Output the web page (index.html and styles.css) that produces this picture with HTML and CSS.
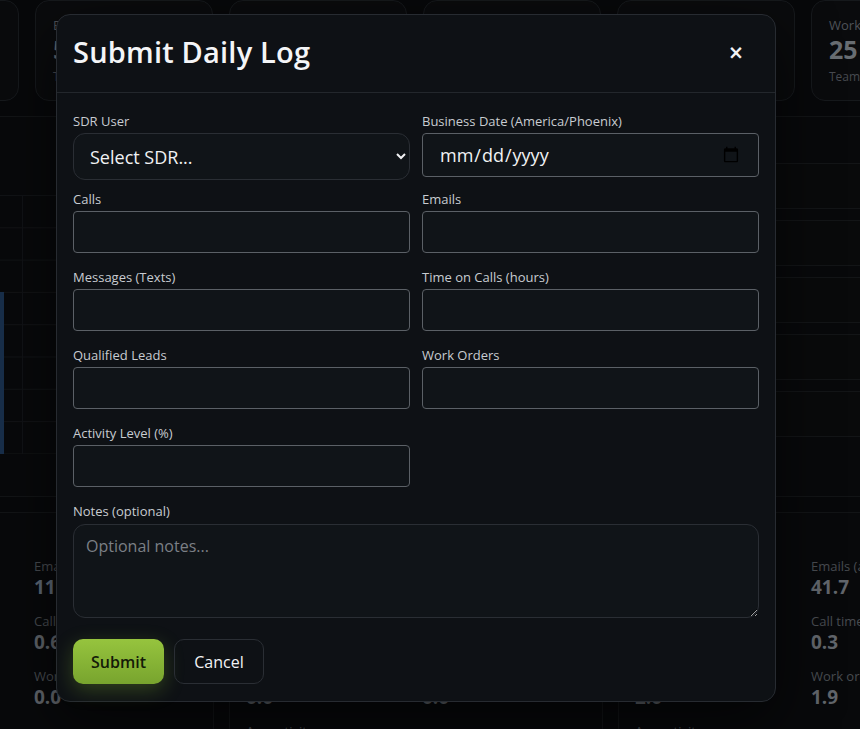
FILE: index.html
```html
<!DOCTYPE html>
<html lang="en">
<head>
  <meta charset="UTF-8" />
  <meta name="viewport" content="width=device-width, initial-scale=1.0"/>
  <title>SDR Dashboard</title>
  <link rel="stylesheet" href="styles.css">
</head>
<body>
  <div class="page">
    <div class="stats">
      <div class="stat"><div class="stat-label">Calls</div><div class="stat-value">48</div><div class="stat-sub">Team total</div></div>
      <div class="stat"><div class="stat-label">Emails</div><div class="stat-value">52</div><div class="stat-sub">Team total</div></div>
      <div class="stat"><div class="stat-label">Messages</div><div class="stat-value">31</div><div class="stat-sub">Team total</div></div>
      <div class="stat"><div class="stat-label">Leads</div><div class="stat-value">12</div><div class="stat-sub">Team total</div></div>
      <div class="stat"><div class="stat-label">Call time</div><div class="stat-value">4.2</div><div class="stat-sub">Team hours</div></div>
      <div class="stat"><div class="stat-label">Work orders</div><div class="stat-value">25</div><div class="stat-sub">Team total</div></div>
    </div>

    <div class="middle">
      <div class="panel chart">
        <div class="grid-area">
          <div class="bar"></div>
        </div>
      </div>
      <div class="panel board">
        <div class="board-row"></div>
        <div class="board-row"></div>
        <div class="board-row"></div>
        <div class="board-row"></div>
        <div class="board-row"></div>
      </div>
    </div>

    <div class="people">
      <div class="person">
        <div class="col">
          <div class="p-label">Calls (avg)</div><div class="p-value">24.0</div>
          <div class="p-label">Texts (avg)</div><div class="p-value">3.0</div>
          <div class="p-label">Leads (avg)</div><div class="p-value">1.0</div>
        </div>
        <div class="col">
          <div class="p-label">Emails (avg)</div><div class="p-value blue">11.0</div>
          <div class="p-label">Call time (avg)</div><div class="p-value">0.6</div>
          <div class="p-label">Work orders (avg)</div><div class="p-value">0.0</div>
        </div>
      </div>
      <div class="person">
        <div class="col">
          <div class="p-label">Calls (avg)</div><div class="p-value">0.0</div>
          <div class="p-label">Texts (avg)</div><div class="p-value">0.0</div>
          <div class="p-label">Leads (avg)</div><div class="p-value">0.0</div>
          <div class="p-label">Avg activity</div>
        </div>
        <div class="col">
          <div class="p-label">Emails (avg)</div><div class="p-value">0.0</div>
          <div class="p-label">Call time (avg)</div><div class="p-value">0.0</div>
          <div class="p-label">Work orders (avg)</div><div class="p-value">0.0</div>
        </div>
      </div>
      <div class="person">
        <div class="col">
          <div class="p-label">Calls (avg)</div><div class="p-value">62.3</div>
          <div class="p-label">Texts (avg)</div><div class="p-value">5.1</div>
          <div class="p-label">Leads (avg)</div><div class="p-value">2.0</div>
          <div class="p-label">Avg activity</div>
        </div>
        <div class="col">
          <div class="p-label">Emails (avg)</div><div class="p-value">41.7</div>
          <div class="p-label">Call time (avg)</div><div class="p-value">0.3</div>
          <div class="p-label">Work orders (avg)</div><div class="p-value">1.9</div>
        </div>
      </div>
    </div>
  </div>

  <div class="overlay"></div>

  <div class="modal">
    <div class="modal-header">
      <h2>Submit Daily Log</h2>
      <button class="close" type="button">&times;</button>
    </div>
    <form class="modal-body">
      <div class="fields">
        <div class="field">
          <label for="sdr">SDR User</label>
          <select id="sdr" class="big-select">
            <option value="">Select SDR...</option>
          </select>
        </div>
        <div class="field">
          <label for="date">Business Date (America/Phoenix)</label>
          <input type="date" id="date" class="date-input" />
        </div>
        <div class="field">
          <label for="calls">Calls</label>
          <input type="number" id="calls" />
        </div>
        <div class="field">
          <label for="emails">Emails</label>
          <input type="number" id="emails" />
        </div>
        <div class="field">
          <label for="texts">Messages (Texts)</label>
          <input type="number" id="texts" />
        </div>
        <div class="field">
          <label for="hours">Time on Calls (hours)</label>
          <input type="number" id="hours" />
        </div>
        <div class="field">
          <label for="leads">Qualified Leads</label>
          <input type="number" id="leads" />
        </div>
        <div class="field">
          <label for="orders">Work Orders</label>
          <input type="number" id="orders" />
        </div>
        <div class="field">
          <label for="activity">Activity Level (%)</label>
          <input type="number" id="activity" />
        </div>
      </div>

      <div class="notes">
        <label for="notes">Notes (optional)</label>
        <textarea id="notes" placeholder="Optional notes..."></textarea>
      </div>

      <div class="actions">
        <button type="submit" class="btn-submit">Submit</button>
        <button type="button" class="btn-cancel">Cancel</button>
      </div>
    </form>
  </div>
</body>
</html>
```

FILE: styles.css
```css
* {
  box-sizing: border-box;
}
body {
  margin: 0;
  background-color: #090a0c;
  font-family: 'Open Sans', sans-serif;
  color: #e8eaed;
  height: 729px;
  overflow: hidden;
  position: relative;
}

/* dashboard behind the modal */
.page {
  width: 1150px;
  margin-left: -159px;
}
.stats {
  display: grid;
  grid-template-columns: repeat(6, 178px);
  gap: 16px;
}
.stat {
  height: 101px;
  border: 1px solid #1b1e22;
  border-radius: 14px;
  background-color: #0c0d10;
  padding: 15px 17px;
}
.stat-label {
  font-size: 13px;
  color: #5d6167;
}
.stat-value {
  font-size: 25px;
  font-weight: 700;
  color: #7b8087;
  line-height: 30px;
}
.stat-sub {
  font-size: 12px;
  color: #54585e;
  margin-top: 4px;
}
.middle {
  display: grid;
  grid-template-columns: 762px 374px;
  gap: 14px;
  margin-top: 15px;
  height: 381px;
}
.panel {
  border-top: 1px solid #16181b;
  border-bottom: 1px solid #16181b;
  background-color: #0a0b0d;
}
.chart {
  padding-top: 78px;
}
.grid-area {
  height: 259px;
  margin-left: 120px;
  position: relative;
  background-image:
    linear-gradient(#15171a 1px, transparent 1px),
    linear-gradient(90deg, #15171a 1px, transparent 1px);
  background-size: 100% 32.3px, 60px 100%;
  background-position: 0 0, 61px 0;
}
.bar {
  position: absolute;
  left: 20px;
  bottom: 0;
  width: 23px;
  height: 162px;
  background-color: #1d3758;
}
.board {
  padding-top: 46px;
  display: flex;
  flex-direction: column;
  gap: 11px;
}
.board-row {
  height: 46px;
  border-top: 1px solid #17191c;
  border-bottom: 1px solid #17191c;
  background-color: #0b0c0e;
}
.people {
  display: grid;
  grid-template-columns: 373px 374px 374px;
  gap: 15px;
  margin-top: 15px;
}
.person {
  height: 230px;
  border: 1px solid #16181b;
  border-radius: 14px;
  background-color: #0a0b0d;
  padding: 44px 16px 0;
  display: grid;
  grid-template-columns: 176px 176px;
}
.p-label {
  font-size: 13px;
  color: #55595f;
  line-height: 18px;
}
.p-value {
  font-size: 19px;
  font-weight: 700;
  color: #72777e;
  line-height: 24px;
  margin-bottom: 13px;
}
.p-value.blue {
  color: #6f7c8e;
}

.overlay {
  position: absolute;
  inset: 0;
  background-color: rgba(0, 0, 0, 0.15);
}

/* modal */
.modal {
  position: absolute;
  left: 56px;
  top: 14px;
  width: 720px;
  height: 688px;
  background-color: #0e1115;
  border: 1px solid #272b31;
  border-radius: 14px;
  box-shadow: 0 20px 60px rgba(0, 0, 0, 0.6);
}
.modal-header {
  height: 78px;
  display: flex;
  align-items: center;
  justify-content: space-between;
  padding: 0 24px 4px 16px;
  border-bottom: 1px solid #23272c;
}
.modal-header h2 {
  margin: 0;
  font-size: 29px;
  font-weight: 600;
  color: #f4f5f7;
  letter-spacing: 0.2px;
}
.close {
  width: 30px;
  height: 30px;
  background: none;
  border: none;
  color: #f2f3f5;
  font-size: 19px;
  font-weight: 700;
  font-family: 'DejaVu Sans', sans-serif;
  padding: 0;
  line-height: 30px;
}
.modal-body {
  padding: 20px 16px 0;
}
.fields {
  display: grid;
  grid-template-columns: 1fr 1fr;
  grid-auto-rows: 66px;
  column-gap: 12px;
  row-gap: 12px;
}
label {
  display: block;
  font-size: 13px;
  font-weight: 500;
  color: #c8ccd1;
  line-height: 16px;
  margin-bottom: 4px;
}
input {
  display: block;
  width: 100%;
  height: 42px;
  background-color: #101418;
  border: 1px solid #5b6066;
  border-radius: 4px;
  color: #eef0f2;
  font-family: 'Open Sans', sans-serif;
  font-size: 16px;
  padding: 0 16px;
}
.date-input {
  height: 44px;
  font-size: 18px;
  color: #f1f2f4;
}
.big-select {
  display: block;
  width: 100%;
  height: 47px;
  background-color: #101418;
  border: 1px solid #2a2e34;
  border-radius: 12px;
  color: #f1f2f4;
  font-family: 'Open Sans', sans-serif;
  font-size: 18px;
  padding: 0 12px;
}
.notes {
  margin-top: 12px;
}
.notes label {
  margin-bottom: 5px;
}
textarea {
  display: block;
  width: 100%;
  height: 94px;
  background-color: #101418;
  border: 1px solid #2a2e34;
  border-radius: 12px;
  color: #eef0f2;
  font-family: 'Open Sans', sans-serif;
  font-size: 16px;
  padding: 10px 12px;
  resize: vertical;
}
textarea::placeholder {
  color: #7b7f85;
}
.actions {
  display: flex;
  gap: 10px;
  margin-top: 21px;
}
.btn-submit {
  height: 45px;
  width: 91px;
  border: none;
  border-radius: 10px;
  background: linear-gradient(#96c43e, #78a42e);
  color: #141b08;
  font-family: 'Open Sans', sans-serif;
  font-size: 16px;
  font-weight: 600;
  box-shadow: 0 6px 20px rgba(130, 180, 50, 0.3);
}
.btn-cancel {
  height: 45px;
  width: 90px;
  border: 1px solid #2a2e34;
  border-radius: 10px;
  background-color: transparent;
  color: #f2f3f5;
  font-family: 'Open Sans', sans-serif;
  font-size: 16px;
  font-weight: 500;
}
```
